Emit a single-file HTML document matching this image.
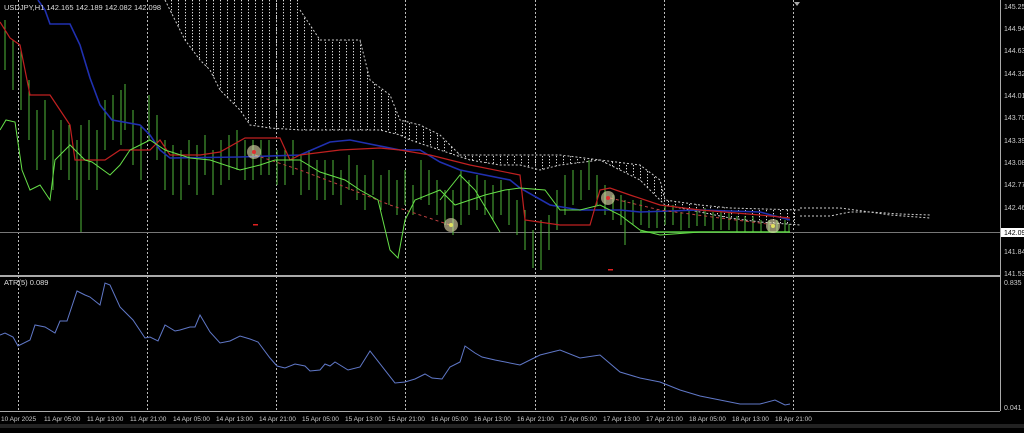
<!DOCTYPE html><html><head><style>
body{margin:0;background:#000;width:1024px;height:428px;overflow:hidden;font-family:"Liberation Sans",sans-serif}
</style></head><body>
<svg width="1024" height="428" xmlns="http://www.w3.org/2000/svg" font-family="Liberation Sans, sans-serif">
<defs>
<pattern id="hatch" width="7" height="3" patternUnits="userSpaceOnUse"><rect x="3" y="0" width="1" height="1.3" fill="#ddd"/></pattern>
</defs>
<rect width="1024" height="428" fill="#000"/>
<!-- cloud -->
<polygon fill="url(#hatch)" points="165,0 300,0 300,10 320,40 360,40 365,60 370,80 390,95 400,120 420,125 440,135 460,155 520,155 560,155 600,160 640,165 660,180 665,200 700,205 730,208 800,210 800,225 760,222 730,218 700,212 665,205 655,195 640,180 600,160 560,165 540,170 520,165 500,165 470,160 440,150 410,140 400,135 380,130 360,130 330,130 300,130 270,128 250,125 240,110 230,100 220,90 210,70 200,60 185,40 175,20"/>
<polyline fill="none" stroke="#ccc" stroke-dasharray="2,2" points="165,0 175,20 185,40 200,60 210,70 220,90 230,100 240,110 250,125 270,128 300,130 330,130 360,130 380,130 400,135 410,140 440,150 470,160 500,165 520,165 540,170 560,165 600,160 640,180 655,195 665,205 700,212 730,218 760,222 800,225"/>
<polyline fill="none" stroke="#ccc" stroke-dasharray="2,2" points="300,10 320,40 360,40 365,60 370,80 390,95 400,120 420,125 440,135 460,155 520,155 560,155 600,160 640,165 660,180 665,200 700,205 730,208 800,210"/>
<polyline fill="none" stroke="#ccc" stroke-dasharray="2,2" points="800,208 840,208 870,212 900,214 930,215"/>
<polyline fill="none" stroke="#ccc" stroke-dasharray="2,2" points="800,216 830,216 850,212 870,212 890,215 930,218"/>
<!-- grid -->
<g stroke="#bbb" stroke-dasharray="2,2" stroke-width="1">
<line x1="18.5" y1="0" x2="18.5" y2="411"/><line x1="147.5" y1="0" x2="147.5" y2="411"/><line x1="276.5" y1="0" x2="276.5" y2="411"/><line x1="405.5" y1="0" x2="405.5" y2="411"/><line x1="535.5" y1="0" x2="535.5" y2="411"/><line x1="664.5" y1="0" x2="664.5" y2="411"/><line x1="793.5" y1="0" x2="793.5" y2="411"/>
</g>
<line x1="0" y1="232.5" x2="1000" y2="232.5" stroke="#777"/>
<!-- green bars -->
<g stroke="#4fb83a" stroke-width="1">
<path d="M5 20V70M13 40V90M21 50V110M29 80V140M37 110V170M45 100V160M53 130V190M61 120V170M69 125V180M77 140V200M81 125V232M89 120V180M97 130V190M105 100V150M113 95V140M121 90V145M125 84V130M133 110V165M141 125V180M149 95V140M157 115V160M165 140V190M173 145V195M181 150V200M189 140V185M197 145V195M205 135V175M213 150V195M221 140V185M229 135V180M237 130V170M245 140V180M253 140V180M261 140V175M269 140V175M277 150V185M285 150V185M293 140V175M301 155V195M309 150V190M317 160V200M325 160V200M333 160V195M341 170V205M349 155V190M357 165V200M365 175V210M373 160V195M381 175V210M389 170V205M397 180V215M405 170V205M413 185V215M421 160V200M429 170V205M437 180V215M445 190V225M453 190V235M461 170V225M469 180V215M477 175V210M485 180V215M493 185V220M501 180V215M509 190V225M517 200V235M525 210V250M533 230V268M541 220V270M549 215V250M557 190V230M565 175V215M573 170V205M581 170V200M589 160V190M597 175V205M605 185V215M613 195V220M621 195V225M625 200V245M633 200V225M641 200V225M649 210V228M657 210V228M665 205V225M673 205V225M681 212V230M689 210V228M697 210V226M705 208V226M713 212V230M721 212V230M729 212V230M737 216V232M745 216V232M753 216V232M761 220V232M769 220V232M777 220V232M785 220V232M789 224V232"/>
</g>
<line x1="640" y1="232" x2="790" y2="232" stroke="#4fc23a" stroke-width="1.5"/>
<!-- lines -->
<polyline fill="none" stroke="#2030b0" stroke-width="1.6" points="38,0 45,10 50,24 70,24 80,45 90,78 100,105 112,120 140,125 150,135 160,150 170,158 240,157 300,155 330,142 350,140 400,150 420,150 440,162 460,170 510,180 520,188 550,205 580,210 620,210 640,212 700,210 760,212 790,220"/>
<polyline fill="none" stroke="#c02020" stroke-width="1.2" points="0,22 10,38 20,45 30,95 50,95 60,110 70,125 75,160 105,160 120,150 150,150 160,140 170,155 200,155 220,152 245,138 280,138 290,160 300,155 340,150 380,148 400,150 430,155 450,160 470,165 520,175 525,220 560,225 590,225 600,190 610,188 630,195 660,205 700,210 760,215 790,218"/>
<polyline fill="none" stroke="#c04040" stroke-dasharray="3,3" points="255,155 300,170 340,185 390,205 450,225"/>
<polyline fill="none" stroke="#c04040" stroke-dasharray="3,3" points="610,198 660,210 720,218 775,225"/>
<polyline fill="none" stroke="#66e048" stroke-width="1" points="0,130 6,120 15,122 22,170 30,190 40,185 50,200 55,160 70,145 85,160 92,162 110,175 120,165 130,150 150,140 165,150 190,158 210,160 240,170 260,165 275,160 300,160 320,172 345,180 360,190 378,200 390,250 398,258 405,220 415,200 440,190 455,205 470,200 485,195 505,190 520,188 545,190 560,210 580,210 600,205 620,215 640,230 660,235 700,232 790,232"/>
<polyline fill="none" stroke="#66e048" stroke-width="1" points="440,200 460,175 475,190 490,215 500,232"/>
<!-- markers -->
<g><circle cx="254" cy="152" r="7" fill="#e8e0b0" opacity="0.6"/><circle cx="254" cy="152" r="2" fill="#e03030"/>
<circle cx="451" cy="225" r="7" fill="#e8e0b0" opacity="0.6"/><circle cx="451" cy="225" r="2" fill="#e0e060"/>
<circle cx="608" cy="198" r="7" fill="#e8e0b0" opacity="0.6"/><circle cx="608" cy="198" r="2" fill="#e03030"/>
<circle cx="773" cy="226" r="7" fill="#e8e0b0" opacity="0.6"/><circle cx="773" cy="226" r="2" fill="#e0e060"/></g>
<rect x="253" y="224" width="5" height="1.5" fill="#e02020"/><rect x="608" y="269" width="5" height="1.5" fill="#e02020"/>
<text x="4" y="10" fill="#ddd" font-size="7.5">USDJPY,H1  142.165 142.189 142.082 142.098</text>
<!-- separator -->
<rect x="0" y="275" width="1000" height="2" fill="#aaa"/>
<text x="4" y="285" fill="#ddd" font-size="7.5">ATR(5) 0.089</text>
<polyline fill="none" stroke="#6078c8" stroke-width="1" points="0,335 5,333 13,337 18,346 30,340 35,325 45,327 55,333 60,321 67,321 77,291 85,295 90,297 100,305 105,283 110,285 120,307 133,320 145,338 150,337 158,341 165,325 175,331 180,330 190,327 195,327 200,315 210,332 220,343 230,341 240,336 250,339 258,342 270,358 277,366 285,368 295,364 305,366 310,371 320,370 325,364 330,366 335,362 348,370 360,367 370,351 395,383 405,382 415,379 425,374 432,378 442,379 450,367 460,362 465,346 475,353 482,357 495,360 520,365 540,355 560,350 580,358 600,355 620,372 640,378 660,382 680,390 700,396 720,400 740,404 760,404 775,400 785,405 790,404"/>
<!-- axes -->
<line x1="1000.5" y1="0" x2="1000.5" y2="411" stroke="#aaa"/>
<line x1="0" y1="411.5" x2="1000" y2="411.5" stroke="#aaa"/>
<rect x="0" y="424" width="1024" height="4" fill="#222"/>
<g fill="#ccc" font-size="7">
<text x="1004" y="9">145.255</text><text x="1004" y="31">144.945</text><text x="1004" y="53">144.635</text><text x="1004" y="76">144.325</text><text x="1004" y="98">144.015</text><text x="1004" y="120">143.705</text><text x="1004" y="143">143.395</text><text x="1004" y="165">143.085</text><text x="1004" y="187">142.775</text><text x="1004" y="210">142.465</text><text x="1004" y="254">141.846</text><text x="1004" y="276">141.536</text><text x="1004" y="285">0.835</text><text x="1004" y="410">0.041</text>
</g>
<rect x="1001" y="228" width="23" height="9" fill="#fff"/><text x="1004" y="235" fill="#000" font-size="7">142.098</text>
<g fill="#ccc" font-size="6.5">
<text x="1" y="421">10 Apr 2025</text><text x="44" y="421">11 Apr 05:00</text><text x="87" y="421">11 Apr 13:00</text><text x="130" y="421">11 Apr 21:00</text><text x="173" y="421">14 Apr 05:00</text><text x="216" y="421">14 Apr 13:00</text><text x="259" y="421">14 Apr 21:00</text><text x="302" y="421">15 Apr 05:00</text><text x="345" y="421">15 Apr 13:00</text><text x="388" y="421">15 Apr 21:00</text><text x="431" y="421">16 Apr 05:00</text><text x="474" y="421">16 Apr 13:00</text><text x="517" y="421">16 Apr 21:00</text><text x="560" y="421">17 Apr 05:00</text><text x="603" y="421">17 Apr 13:00</text><text x="646" y="421">17 Apr 21:00</text><text x="689" y="421">18 Apr 05:00</text><text x="732" y="421">18 Apr 13:00</text><text x="775" y="421">18 Apr 21:00</text>
</g>
<polygon points="794,2 800,2 797,6" fill="#aaa"/>
</svg>
</body></html>
